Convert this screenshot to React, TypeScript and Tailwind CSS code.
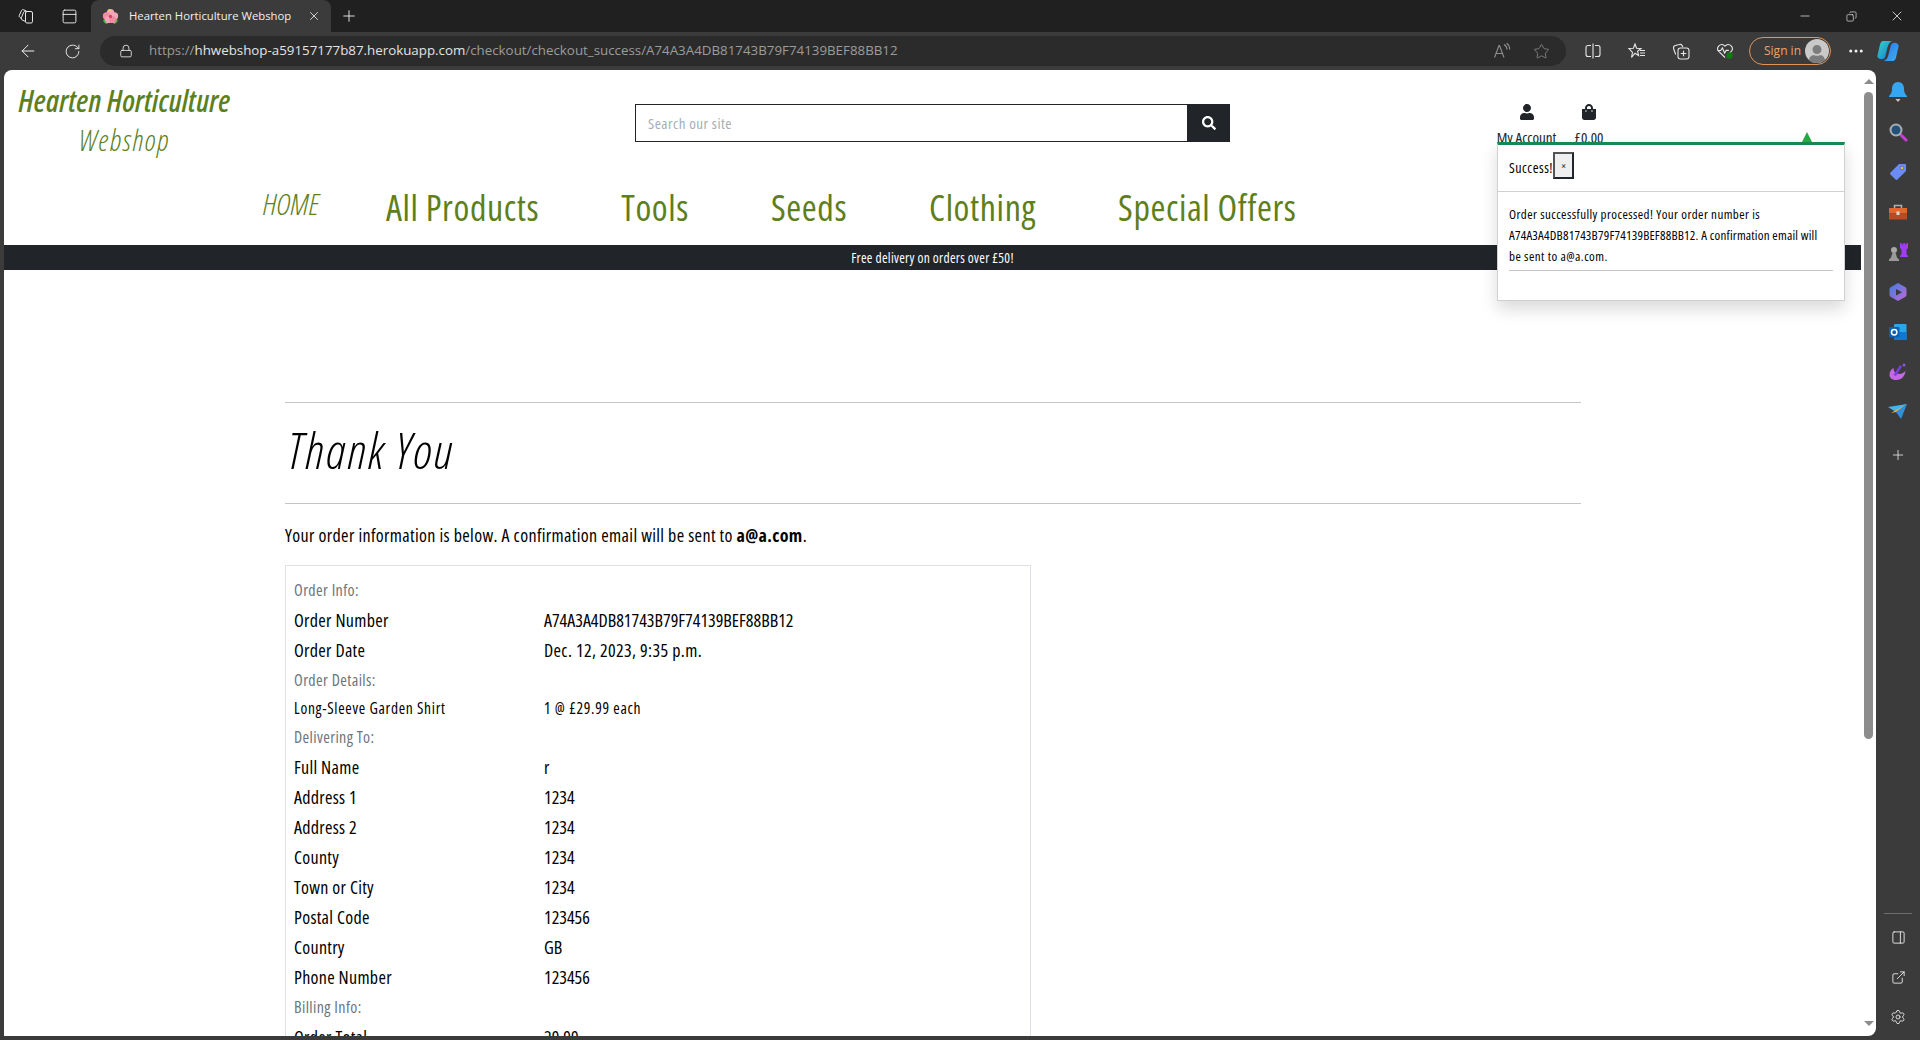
import {
  ArrowLeft,
  Copy,
  ExternalLink,
  Lock,
  Minus,
  MoreHorizontal,
  PanelRight,
  PanelTop,
  Plus,
  RotateCw,
  Settings,
  Star,
  X,
} from 'lucide-react'
import { FaSearch, FaShoppingBag, FaUser } from 'react-icons/fa'

const display = "font-['Open_Sans',sans-serif] [font-stretch:75%]"

type Row =
  | { kind: 'head'; label: string }
  | { kind: 'row'; label: string; value: string; small?: boolean; wide?: boolean }

const rows: Row[] = [
  { kind: 'head', label: 'Order Info:' },
  { kind: 'row', label: 'Order Number', value: 'A74A3A4DB81743B79F74139BEF88BB12' },
  { kind: 'row', label: 'Order Date', value: 'Dec. 12, 2023, 9:35 p.m.', wide: true },
  { kind: 'head', label: 'Order Details:' },
  { kind: 'row', label: 'Long-Sleeve Garden Shirt', value: '1 @ £29.99 each', small: true },
  { kind: 'head', label: 'Delivering To:' },
  { kind: 'row', label: 'Full Name', value: 'r' },
  { kind: 'row', label: 'Address 1', value: '1234' },
  { kind: 'row', label: 'Address 2', value: '1234' },
  { kind: 'row', label: 'County', value: '1234' },
  { kind: 'row', label: 'Town or City', value: '1234' },
  { kind: 'row', label: 'Postal Code', value: '123456' },
  { kind: 'row', label: 'Country', value: 'GB' },
  { kind: 'row', label: 'Phone Number', value: '123456' },
  { kind: 'head', label: 'Billing Info:' },
  { kind: 'row', label: 'Order Total', value: '29.99' },
]

function Favicon() {
  return (
    <svg width="17" height="17" viewBox="0 0 16 16">
      <path d="M1 12c1-2.500 3-2.500 5-1l-1 4c-2 0-3-1.500-4-3zM15 12c-1-2.500-3-2.500-5-1l1 4c2 0 3-1.500 4-3z" fill="#5aa545" />
      <circle cx="8" cy="4.500" r="3.500" fill="#f5a5b8" />
      <circle cx="4.300" cy="7.500" r="3.500" fill="#f08da6" />
      <circle cx="11.700" cy="7.500" r="3.500" fill="#f5a5b8" />
      <circle cx="6" cy="11" r="3.200" fill="#f5a5b8" />
      <circle cx="10" cy="11" r="3.200" fill="#f08da6" />
      <circle cx="8" cy="8" r="1.600" fill="#e0405f" />
      <circle cx="7" cy="2" r="1" fill="#f4d24a" />
    </svg>
  )
}

function WorkspacesIcon() {
  return (
    <svg width="16" height="16" viewBox="0 0 16 16" fill="none" stroke="#e8e8e8" strokeWidth="1">
      <rect x="7.500" y="3.500" width="7" height="11.500" rx="1.500" />
      <path d="M7.500 13.500 4 11.800a1.500 1.500 0 0 1-.7-2l2.400-5.600a1.500 1.500 0 0 1 2-.8l1 .4" />
      <path d="M3.800 10.500 1.800 9.200a1.400 1.400 0 0 1-.5-1.900L3.600 2.400a1.400 1.400 0 0 1 1.900-.6l3 1.200" />
    </svg>
  )
}

function ReadAloudIcon() {
  return (
    <svg width="18" height="18" viewBox="0 0 18 18" fill="none" stroke="#8f8f8f" strokeWidth="1.100">
      <path d="M1.500 15.500 6 3.500h.5l4.500 12M3 11.500h6.500" />
      <path d="M11 2.500c2 1.200 3 3 3 5M13.500 1.200c2.200 1.500 3.300 3.800 3.200 6.300" />
    </svg>
  )
}

function SplitIcon() {
  return (
    <svg width="18" height="18" viewBox="0 0 18 18" fill="none" stroke="#e8e8e8" strokeWidth="1.100">
      <path d="M7 3.500H4a2 2 0 0 0-2 2v7a2 2 0 0 0 2 2h3M11 3.500h3a2 2 0 0 1 2 2v7a2 2 0 0 1-2 2h-3M9 1.500v15" />
    </svg>
  )
}

function FavoritesIcon() {
  return (
    <svg width="18" height="18" viewBox="0 0 18 18" fill="none" stroke="#e8e8e8" strokeWidth="1.100">
      <path d="M7 2l1.600 4.200 4.400.3-3.400 2.800 1 4.200L7 11.200 3.500 15.500l1-5.200L1 6.500l4.400-.3z" />
      <path d="M12 8.500h5M12 11h5M12 13.500h5" />
    </svg>
  )
}

function CollectionsIcon() {
  return (
    <svg width="18" height="18" viewBox="0 0 18 18" fill="none" stroke="#e8e8e8" strokeWidth="1.100">
      <rect x="6" y="6" width="11" height="11" rx="2.500" />
      <path d="M11.500 8.800v5.500M8.800 11.500h5.500" />
      <path d="M3.800 12.500C2.600 9.800 2 8 1.600 6.500a2.500 2.500 0 0 1 1.800-3l4-1a2.500 2.500 0 0 1 3 1.500l.4 1" />
    </svg>
  )
}

function HealthIcon() {
  return (
    <svg width="18" height="18" viewBox="0 0 18 18" fill="none">
      <path
        d="M9 15.500 2.800 9.400a4 4 0 0 1 5.600-5.700l.6.6.6-.6a4 4 0 0 1 5.600 5.700l-1.500 1.400"
        stroke="#e8e8e8"
        strokeWidth="1.100"
      />
      <path d="M1.500 8.500h3.200L6.400 6l2.200 5 1.600-2.600h2.600" stroke="#e8e8e8" strokeWidth="1.100" />
      <circle cx="13.500" cy="13.500" r="3.200" fill="#107c10" />
    </svg>
  )
}

function CopilotIcon() {
  return (
    <svg width="24" height="22" viewBox="0 0 26 24">
      <defs>
        <linearGradient id="cpa" x1="0" y1="0" x2="1" y2="1">
          <stop offset="0" stopColor="#37d3c2" />
          <stop offset="1" stopColor="#1478d8" />
        </linearGradient>
        <linearGradient id="cpb" x1="0" y1="0" x2="1" y2="1">
          <stop offset="0" stopColor="#2a6fe8" />
          <stop offset="1" stopColor="#3fb4f0" />
        </linearGradient>
      </defs>
      <path d="M8 1h10c-3 1-4.500 3-5.500 7L10 18c-.5 2-2 3-4 3-3 0-5-2-4.500-4L4 6C4.700 3 5.500 1 8 1z" fill="url(#cpa)" />
      <path d="M18 23H8c3-1 4.500-3 5.500-7L16 6c.5-2 2-3 4-3 3 0 5 2 4.500 4L22 18c-.7 3-1.500 5-4 5z" fill="url(#cpb)" />
    </svg>
  )
}

function BellIcon() {
  return (
    <svg width="20" height="22" viewBox="0 0 20 22">
      <path d="M10 1C6 1 4 4 4 8c0 3-1 5-3 7v1h18v-1c-2-2-3-4-3-7 0-4-2-7-6-7z" fill="#35a7f2" />
      <path d="M7.500 18h5l-2.500 3z" fill="#c8c8c8" />
    </svg>
  )
}

function SearchColorIcon() {
  return (
    <svg width="20" height="20" viewBox="0 0 20 20" fill="none">
      <path d="M12.500 12.500 18 18" stroke="#c53fd6" strokeWidth="3" strokeLinecap="round" />
      <circle cx="8" cy="8" r="5.500" stroke="#a8adb2" strokeWidth="2" fill="#24517a" />
    </svg>
  )
}

function TagIcon() {
  return (
    <svg width="18" height="18" viewBox="0 0 18 18">
      <path d="M10 1h6a1 1 0 0 1 1 1v6L8.500 16.500a1.500 1.500 0 0 1-2 0l-5-5a1.500 1.500 0 0 1 0-2z" fill="#6c8cf5" />
      <circle cx="13" cy="5" r="1.800" fill="#f3c41c" stroke="#4a5bc0" strokeWidth=".7" />
    </svg>
  )
}

function ToolboxIcon() {
  return (
    <svg width="20" height="18" viewBox="0 0 20 18">
      <path d="M6.500 5V2.500h7V5" fill="none" stroke="#b0b0b0" strokeWidth="1.500" />
      <rect x="1" y="5" width="18" height="5.500" fill="#e2672f" />
      <rect x="1" y="10.500" width="18" height="6" fill="#bb4a24" />
      <rect x="8.500" y="8.500" width="3" height="3.500" fill="#d9d9d9" />
    </svg>
  )
}

function ChessIcon() {
  return (
    <svg width="20" height="20" viewBox="0 0 20 20">
      <path d="M12 1h1.800v1.500h1.400V1H17v1.500h1.400V1H20v5l-1.500 1.500V12l1.500 2v1h-8v-1l1.500-2V7.500L12 6z" fill="#a13df0" />
      <circle cx="6" cy="8" r="3" fill="#a8a8a8" />
      <path d="M4.500 10.500h3l1.500 5 2 2V19H1v-1.500l2-2z" fill="#9a9a9a" />
    </svg>
  )
}

function M365Icon() {
  return (
    <svg width="18" height="20" viewBox="0 0 18 20">
      <defs>
        <linearGradient id="msa" x1="0" y1="0" x2="1" y2="1">
          <stop offset="0" stopColor="#3c7fe0" />
          <stop offset="1" stopColor="#c267d8" />
        </linearGradient>
      </defs>
      <path d="M9 1l7 4c1 .6 1.500 1.300 1.500 2.500v5c0 1.200-.5 1.900-1.500 2.500l-7 4-7-4C1 14.400.5 13.700.5 12.500v-5C.5 6.300 1 5.600 2 5z" fill="url(#msa)" />
      <path d="M7 7l6 3.300L7 13.500z" fill="#3b3b3b" />
    </svg>
  )
}

function OutlookIcon() {
  return (
    <svg width="18" height="18" viewBox="0 0 18 18">
      <rect x="5" y="1" width="12.500" height="16" rx="1" fill="#28a8ea" />
      <path d="M5 9h12.500v8H5z" fill="#0f78d4" />
      <rect x="0" y="4" width="10.500" height="10.500" rx="1" fill="#0a5fb5" />
      <circle cx="5.200" cy="9.200" r="2.700" fill="none" stroke="#fff" strokeWidth="1.500" />
    </svg>
  )
}

function PenIcon() {
  return (
    <svg width="20" height="20" viewBox="0 0 20 20">
      <path d="M1.500 13c0-4 2-6 4-7 0 3 1.500 6 6 6 2 0 4-1 6-3-.5 5-4 9-9 9-4 0-7-2-7-5z" fill="#c766e8" />
      <path d="M5.500 13 12 3l2 1.500L8 14z" fill="#7a3fd6" />
      <circle cx="16" cy="3" r="1.500" fill="#8f55e0" />
    </svg>
  )
}

function SendIcon() {
  return (
    <svg width="20" height="16" viewBox="0 0 20 16">
      <path d="M0 3 19 0 8 8z" fill="#40b5f0" />
      <path d="M19 0 8 8l-5 1z" fill="#f5b12e" />
      <path d="M19 0 13 15 8 8z" fill="#2f8fe0" />
    </svg>
  )
}

function SideSlot({ children }: { children: React.ReactNode }) {
  return <div className="h-10 w-full flex items-center justify-center">{children}</div>
}

export default function App() {
  return (
    <div className="h-screen w-full overflow-hidden flex flex-col bg-[#3b3b3b]">
      {/* tab strip */}
      <div className="h-8 shrink-0 bg-[#202020] flex items-stretch font-['Open_Sans',sans-serif]">
        <div className="w-[52px] flex items-center justify-center">
          <WorkspacesIcon />
        </div>
        <div className="w-[34px] flex items-center justify-center">
          <PanelTop size={17} strokeWidth={1.3} className="text-[#f0f0f0]" />
        </div>
        <div className="ml-[5px] w-[240px] bg-[#3b3b3b] rounded-t-lg flex items-center pl-[11px] pr-[10px] gap-[10px]">
          <Favicon />
          <span className="text-[11.3px] text-[#f0f0f0] whitespace-nowrap flex-1 [font-stretch:90%]">
            Hearten Horticulture Webshop
          </span>
          <X size={14} strokeWidth={1.4} className="text-[#f0f0f0]" />
        </div>
        <div className="ml-[9px] flex items-center">
          <Plus size={18} strokeWidth={1.2} className="text-[#f0f0f0]" />
        </div>
        <div className="ml-auto flex items-center text-[#f0f0f0]">
          <div className="w-[46px] flex justify-center">
            <Minus size={14} strokeWidth={1.2} />
          </div>
          <div className="w-[46px] flex justify-center">
            <Copy size={11} strokeWidth={1.4} className="-scale-x-100" />
          </div>
          <div className="w-[46px] flex justify-center">
            <X size={16} strokeWidth={1.2} />
          </div>
        </div>
      </div>

      {/* toolbar */}
      <div className="h-[38px] shrink-0 flex items-center font-['Open_Sans',sans-serif]">
        <div className="w-[56px] flex justify-center">
          <ArrowLeft size={20} strokeWidth={1.2} className="text-[#f0f0f0]" />
        </div>
        <div className="w-[32px] flex justify-center">
          <RotateCw size={17} strokeWidth={1.3} className="text-[#f0f0f0]" />
        </div>
        <div className="ml-[12px] w-[1466px] h-[30px] rounded-full bg-[#2b2b2b] flex items-center pl-[19px] pr-[16px]">
          <Lock size={14} strokeWidth={1.4} className="text-[#f0f0f0]" />
          <span className="ml-[16px] text-[13.33px] whitespace-nowrap text-[#9c9c9c]">
            https://<span className="text-[#e4e4e4]">hhwebshop-a59157177b87.herokuapp.com</span>
            /checkout/checkout_success/A74A3A4DB81743B79F74139BEF88BB12
          </span>
          <div className="ml-auto flex items-center gap-[22px]">
            <ReadAloudIcon />
            <Star size={17} strokeWidth={1.1} className="text-[#8f8f8f]" />
          </div>
        </div>
        <div className="ml-[18px] flex items-center gap-[26px]">
          <SplitIcon />
          <FavoritesIcon />
          <CollectionsIcon />
          <HealthIcon />
        </div>
        <div className="ml-[15px] w-[82px] h-[28px] rounded-full border border-[#e0955a] flex items-center pl-[14px] pr-[1px] justify-between">
          <span className="text-[12px] text-[#eda468]">Sign in</span>
          <div className="w-[24px] h-[24px] rounded-full bg-[#c9c9c9] flex items-end justify-center overflow-hidden">
            <FaUser size={18} className="text-[#7c7c7c]" />
          </div>
        </div>
        <div className="ml-[15px] w-[20px] flex justify-center">
          <MoreHorizontal size={18} className="text-[#f0f0f0]" />
        </div>
        <div className="ml-[10px]">
          <CopilotIcon />
        </div>
      </div>

      {/* page + sidebar */}
      <div className="flex-1 min-h-0 flex pl-[4px]">
        <div className="flex-1 min-w-0 mb-[4px] bg-white rounded-t-lg rounded-br-lg overflow-hidden relative flex">
          <div className={`flex-1 min-w-0 relative ${display} text-black`}>
            <header className="grid grid-cols-3 h-[110px]">
              <div className="pl-[1px] pt-[9px] w-[240px] flex flex-col items-center italic text-[#5e7f1c]">
                <div className="text-[30px] leading-[44px] font-semibold whitespace-nowrap tracking-[0.2px]">
                  Hearten Horticulture
                </div>
                <div className="text-[29px] leading-[34px] whitespace-nowrap font-light tracking-[1.4px]">Webshop</div>
              </div>
              <div className="pt-[34px] px-[12px]">
                <div className="flex h-[38px]">
                  <div className="flex-1 border border-r-0 border-[#212529] flex items-center pl-[12px] text-[15px] text-[#a6adb5] tracking-[0.5px]">
                    Search our site
                  </div>
                  <div className="w-[43px] bg-[#212529] flex items-center justify-center">
                    <FaSearch size={14} className="text-white" />
                  </div>
                </div>
              </div>
              <div className="flex justify-end pr-[257px] pt-[34px] gap-[19px] text-[#212529]">
                <div className="flex flex-col items-center w-[57px]">
                  <FaUser size={16} />
                  <span className="text-[15px] leading-[22px] mt-[6px] whitespace-nowrap">My Account</span>
                </div>
                <div className="flex flex-col items-center w-[30px]">
                  <FaShoppingBag size={16} />
                  <span className="text-[15px] leading-[22px] mt-[6px] whitespace-nowrap">£0.00</span>
                </div>
              </div>
            </header>

            <nav className="h-[65px] flex items-center pl-[259px] pb-[10px] text-[#5e7f1c] whitespace-nowrap">
              <a className="w-[123px] italic font-light text-[30px] mb-[9px]">HOME</a>
              <div className="flex gap-[82px] text-[36px] tracking-[0.6px]">
                <a>All Products</a>
                <a>Tools</a>
                <a>Seeds</a>
                <a>Clothing</a>
                <a>Special Offers</a>
              </div>
            </nav>

            <div className="h-[25px] pt-[1px] bg-[#212529] flex items-center justify-center text-white text-[13.5px] tracking-[0.3px]">
              Free delivery on orders over £50!
            </div>

            <main className="ml-[281px] w-[1296px] pt-[132px]">
              <hr className="border-[#c4c4c4]" />
              <h2 className="h-[100px] flex items-center pl-[3px] pb-[6px] text-[50px] italic font-light text-black tracking-[1.7px]">
                Thank You
              </h2>
              <hr className="border-[#c4c4c4]" />
              <p className="mt-[19px] text-[18px] leading-[24px] tracking-[0.36px]">
                Your order information is below. A confirmation email will be sent to <strong>a@a.com</strong>.
              </p>
              <div className="mt-[18px] w-[746px] border border-[#dee2e6] pt-[9px] pl-[8px]">
                {rows.map((r) =>
                  r.kind === 'head' ? (
                    <div key={r.label} className="h-[30px] flex items-center text-[16px] text-[#6c757d] tracking-[0.4px]">
                      {r.label}
                    </div>
                  ) : (
                    <div
                      key={r.label}
                      className={`grid grid-cols-[250px_1fr] items-center ${
                        r.small ? 'h-[27px] text-[15.5px] tracking-[0.7px]' : 'h-[30px] text-[18px]'
                      }`}
                    >
                      <span className={r.small ? '' : 'tracking-[0.3px]'}>{r.label}</span>
                      <span className={r.wide ? 'tracking-[0.36px]' : ''}>{r.value}</span>
                    </div>
                  ),
                )}
              </div>
            </main>

            {/* success toast */}
            <div className="absolute left-[1493px] top-[72px] w-[348px] h-[159px] bg-white border border-[#d0d0d0] border-t-[3px] border-t-[#198754] shadow-[0_8px_16px_rgba(0,0,0,0.15)]">
              <div className="absolute -top-[13px] left-[304px] w-0 h-0 border-x-[5px] border-x-transparent border-b-[10px] border-b-[#28a745]" />
              <div className="h-[47px] flex items-start pl-[11px] border-b border-[#d0d0d0]">
                <span className="mt-[13px] text-[14px] font-medium leading-[20px] tracking-[0.5px]">Success!</span>
                <button className="mt-[7px] w-[21px] h-[27px] border-2 border-[#212529] border-t-[#555] border-l-[#555] bg-[#efefef] text-[10px] leading-none">
                  ×
                </button>
              </div>
              <div className="px-[11px] pt-[12px] text-[13px] leading-[21px]">
                <p className="tracking-[0.43px]">Order successfully processed! Your order number is</p>
                <p className="whitespace-nowrap tracking-[0.2px]">
                  A74A3A4DB81743B79F74139BEF88BB12. A confirmation email will
                </p>
                <p className="tracking-[0.45px]">be sent to a@a.com.</p>
                <hr className="mt-[3px] border-[#c4c4c4]" />
              </div>
            </div>
          </div>

          {/* scrollbar */}
          <div className="w-[15px] shrink-0 flex flex-col items-center">
            <div className="mt-[9px] w-0 h-0 border-x-[5px] border-x-transparent border-b-[5px] border-b-[#8c8c8c]" />
            <div className="mt-[8px] w-[9px] h-[647px] rounded-full bg-[#8c8c8c]" />
            <div className="mt-auto mb-[10px] w-0 h-0 border-x-[5px] border-x-transparent border-t-[5px] border-t-[#8c8c8c]" />
          </div>
        </div>

        {/* edge sidebar */}
        <div className="w-[44px] shrink-0 flex flex-col items-center pt-[2px] pb-[3px]">
          <SideSlot><BellIcon /></SideSlot>
          <SideSlot><SearchColorIcon /></SideSlot>
          <SideSlot><TagIcon /></SideSlot>
          <SideSlot><ToolboxIcon /></SideSlot>
          <SideSlot><ChessIcon /></SideSlot>
          <SideSlot><M365Icon /></SideSlot>
          <SideSlot><OutlookIcon /></SideSlot>
          <SideSlot><PenIcon /></SideSlot>
          <SideSlot><SendIcon /></SideSlot>
          <div className="h-[3px]" />
          <SideSlot><Plus size={16} strokeWidth={1.2} className="text-[#f0f0f0]" /></SideSlot>
          <div className="mt-auto w-[28px] border-t border-[#6e6e6e] mb-[3px]" />
          <SideSlot><PanelRight size={15} strokeWidth={1.4} className="text-[#f0f0f0]" /></SideSlot>
          <SideSlot><ExternalLink size={15} strokeWidth={1.4} className="text-[#f0f0f0]" /></SideSlot>
          <SideSlot><Settings size={16} strokeWidth={1.3} className="text-[#f0f0f0]" /></SideSlot>
        </div>
      </div>
    </div>
  )
}
